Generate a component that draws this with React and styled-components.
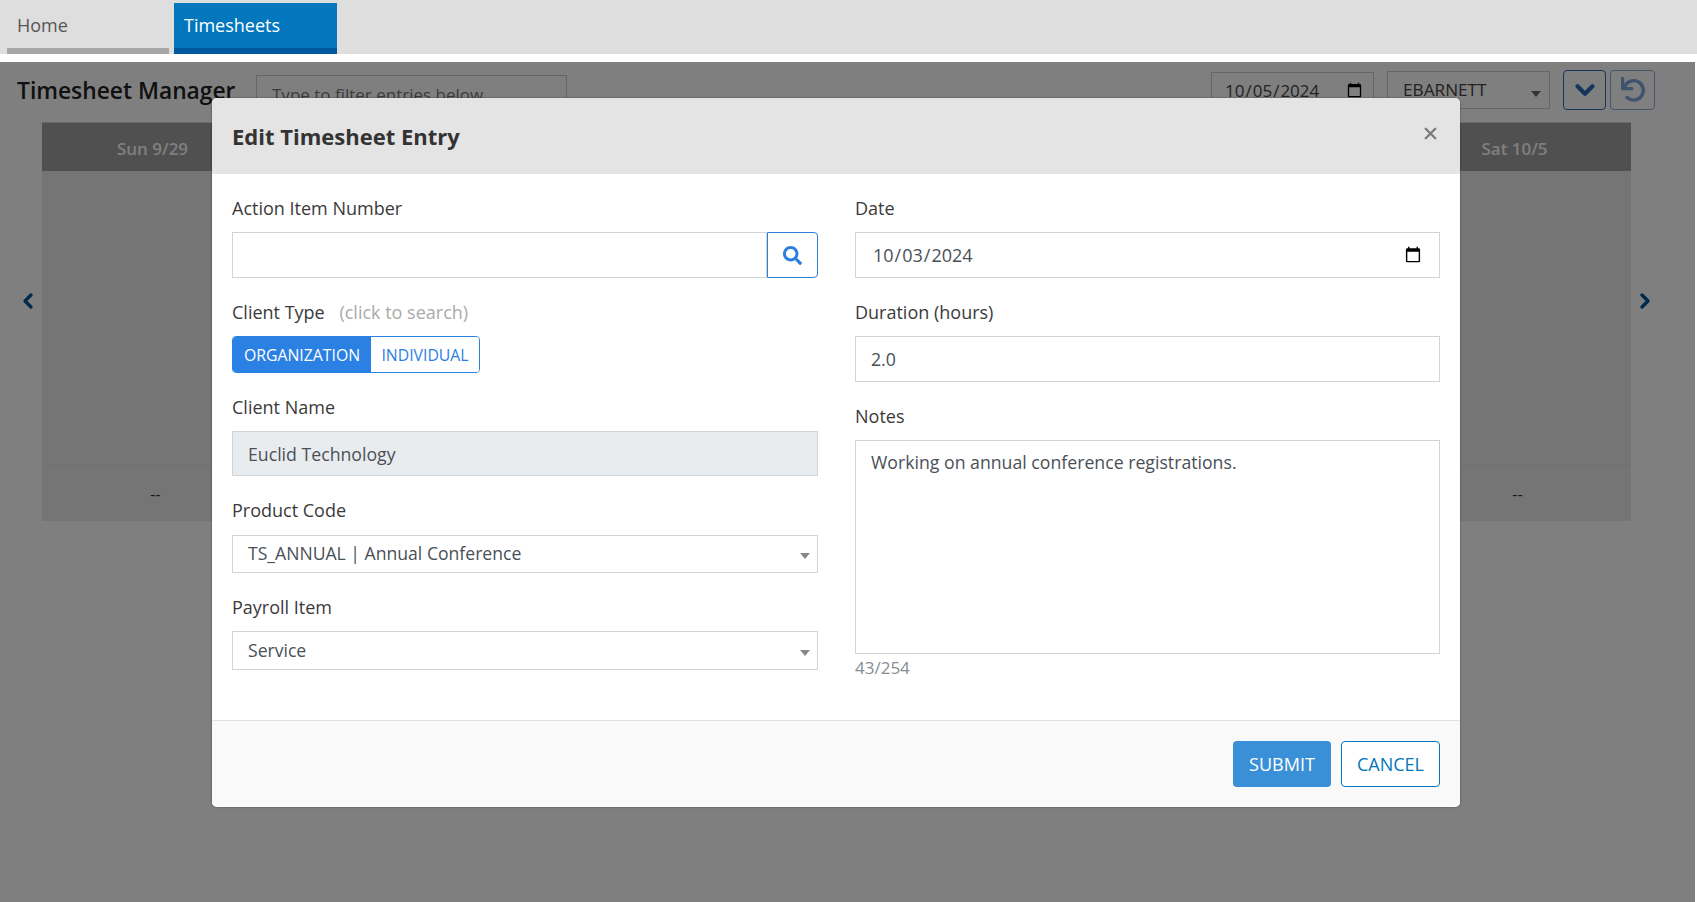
import React from "react";
import styled, { createGlobalStyle } from "styled-components";
import { ChevronDown, ChevronLeft, ChevronRight, X } from "lucide-react";
import { FaSearch } from "react-icons/fa";

const GlobalStyle = createGlobalStyle`
  html, body {
    margin: 0;
    padding: 0;
    background: #fff;
    height: 100%;
  }
  body {
    font-family: "Open Sans", "Liberation Sans", sans-serif;
    color: #333;
    overflow: hidden;
  }
  * {
    box-sizing: border-box;
  }
`;

const days = ["Sun 9/29", "Mon 9/30", "Tue 10/1", "Wed 10/2", "Thu 10/3", "Fri 10/4", "Sat 10/5"];

function Select({ value, height }) {
  return (
    <SelectWrap $height={height}>
      <SelectBox defaultValue={value}>
        <option>{value}</option>
      </SelectBox>
    </SelectWrap>
  );
}

function UndoIcon() {
  return (
    <svg width="24" height="26" viewBox="0 0 24 26" fill="none" stroke="currentColor" strokeWidth="3.4">
      <path d="M1.5 1.5V11.6H10.8" strokeLinejoin="round" strokeLinecap="round" />
      <path d="M3.5 10A9.7 9.7 0 1 1 6 20.5" strokeLinecap="round" />
    </svg>
  );
}

export default function App() {
  return (
    <Page>
      <GlobalStyle />
      <TopBar>
        <Tab>Home</Tab>
        <Tab $active>Timesheets</Tab>
      </TopBar>

      <Toolbar>
        <Title>Timesheet Manager</Title>
        <FilterInput placeholder="Type to filter entries below" />
        <ToolbarRight>
          <ToolbarDate type="date" defaultValue="2024-10-05" />
          <ToolbarSelect>
            EBARNETT
            <SmallCaret />
          </ToolbarSelect>
          <IconButton $width={43}>
            <ChevronDown size={30} strokeWidth={3.4} />
          </IconButton>
          <IconButton $width={45} $muted>
            <UndoIcon />
          </IconButton>
        </ToolbarRight>
      </Toolbar>

      <CalendarRow>
        <Gutter $width={42} $left={16}>
          <ChevronLeft size={24} strokeWidth={3.4} />
        </Gutter>
        <Calendar>
          {days.map((day) => (
            <DayColumn key={day}>
              <DayHeader>{day}</DayHeader>
              <DayBody />
              <DayTotal>--</DayTotal>
            </DayColumn>
          ))}
        </Calendar>
        <Gutter $width={66} $left={2}>
          <ChevronRight size={24} strokeWidth={3.4} />
        </Gutter>
      </CalendarRow>

      <Overlay>
        <Modal>
          <ModalHeader>
            <ModalTitle>Edit Timesheet Entry</ModalTitle>
            <CloseButton>
              <X size={19} strokeWidth={3} />
            </CloseButton>
          </ModalHeader>

          <ModalBody>
            <Column>
              <Field>
                <Label>Action Item Number</Label>
                <InputGroup>
                  <TextInput $height={46} />
                  <SearchButton>
                    <FaSearch size={19} />
                  </SearchButton>
                </InputGroup>
              </Field>
              <Field>
                <Label>
                  Client Type <Hint>(click to search)</Hint>
                </Label>
                <Toggle>
                  <ToggleOption $active $width={138}>ORGANIZATION</ToggleOption>
                  <ToggleOption $width={108}>INDIVIDUAL</ToggleOption>
                </Toggle>
              </Field>
              <Field>
                <Label>Client Name</Label>
                <TextInput $height={45} $disabled readOnly defaultValue="Euclid Technology" />
              </Field>
              <Field>
                <Label $gap={13}>Product Code</Label>
                <Select value="TS_ANNUAL | Annual Conference" height={38} />
              </Field>
              <Field>
                <Label>Payroll Item</Label>
                <Select value="Service" height={39} />
              </Field>
            </Column>

            <Column>
              <Field>
                <Label>Date</Label>
                <DateInput type="date" defaultValue="2024-10-03" />
              </Field>
              <Field>
                <Label>Duration (hours)</Label>
                <TextInput $height={46} defaultValue="2.0" />
              </Field>
              <Field>
                <Label>Notes</Label>
                <Notes defaultValue="Working on annual conference registrations." />
                <Counter>43/254</Counter>
              </Field>
            </Column>
          </ModalBody>

          <ModalFooter>
            <SubmitButton>SUBMIT</SubmitButton>
            <CancelButton>CANCEL</CancelButton>
          </ModalFooter>
        </Modal>
      </Overlay>
    </Page>
  );
}

const Page = styled.div`
  position: relative;
  width: 1697px;
  height: 902px;
  overflow: hidden;
  background: #fff;
`;

const TopBar = styled.div`
  display: flex;
  align-items: flex-end;
  gap: 5px;
  height: 54px;
  padding-left: 7px;
  background: #dedede;
`;

const Tab = styled.div`
  width: ${(p) => (p.$active ? "163px" : "162px")};
  height: ${(p) => (p.$active ? "51px" : "54px")};
  padding: ${(p) => (p.$active ? "7px 0 0 10px" : "10px 0 0 10px")};
  font-size: 18px;
  line-height: 30px;
  color: ${(p) => (p.$active ? "#fff" : "#555")};
  background: ${(p) => (p.$active ? "#0277bd" : "transparent")};
  border-bottom: 6px solid ${(p) => (p.$active ? "#01579b" : "#a6a6a6")};
`;

const Toolbar = styled.div`
  display: flex;
  align-items: flex-start;
  height: 60px;
  margin-top: 8px;
  padding-left: 17px;
`;

const Title = styled.h1`
  margin: 10px 0 0;
  width: 239px;
  font-size: 22.8px;
  line-height: 38px;
  font-weight: 600;
  color: #222;
  white-space: nowrap;
`;

const FilterInput = styled.input`
  width: 311px;
  height: 38px;
  margin-top: 13px;
  padding: 0 15px;
  font: 17px "Open Sans", sans-serif;
  border: 1px solid #ccc;
  background: #fff;
  &::placeholder {
    color: #777;
  }
`;

const ToolbarRight = styled.div`
  display: flex;
  align-items: flex-start;
  gap: 4px;
  margin-left: auto;
  margin-right: 42px;
`;

const ToolbarDate = styled.input`
  width: 163px;
  height: 37px;
  margin: 10px 9px 0 0;
  padding: 0 8px 0 12px;
  font: 17px "Open Sans", sans-serif;
  color: #444;
  background: #fff;
  border: 1px solid #ccc;
`;

const ToolbarSelect = styled.div`
  position: relative;
  width: 163px;
  height: 38px;
  margin: 9px 9px 0 0;
  padding-left: 15px;
  font-size: 17.2px;
  line-height: 36px;
  color: #444;
  border: 1px solid #ccc;
`;

const SmallCaret = styled.span`
  position: absolute;
  right: 8px;
  top: 19px;
  border-left: 5px solid transparent;
  border-right: 5px solid transparent;
  border-top: 6px solid #666;
`;

const IconButton = styled.button`
  display: flex;
  align-items: center;
  justify-content: center;
  width: ${(p) => p.$width}px;
  height: 40px;
  margin-top: 8px;
  padding: 0;
  color: ${(p) => (p.$muted ? "#7aa6dc" : "#2a6cb5")};
  background: #fff;
  border: 1px solid ${(p) => (p.$muted ? "#8aaad2" : "#2a6cb5")};
  border-radius: 4px;
`;

const CalendarRow = styled.div`
  display: flex;
  align-items: flex-start;
`;

const Gutter = styled.div`
  flex: 0 0 auto;
  width: ${(p) => p.$width}px;
  margin-top: 167px;
  padding-left: ${(p) => p.$left}px;
  color: #01579b;
`;

const Calendar = styled.div`
  display: grid;
  grid-template-columns: repeat(7, 1fr);
  flex: 1;
  height: 399px;
  background: #eaeaea;
`;

const DayColumn = styled.div`
  display: flex;
  flex-direction: column;
`;

const DayHeader = styled.div`
  height: 49px;
  padding-right: 6px;
  font-size: 17px;
  font-weight: 600;
  line-height: 52px;
  text-align: center;
  color: #fff;
  background: #a0a0a0;
  border-top: 1px solid #d2d2d2;
`;

const DayBody = styled.div`
  flex: 1;
`;

const DayTotal = styled.div`
  height: 56px;
  font-size: 16px;
  line-height: 56px;
  text-align: center;
  color: #333;
  border-top: 1px solid #e0e0e0;
`;

const Overlay = styled.div`
  position: absolute;
  top: 62px;
  left: 0;
  right: 2px;
  bottom: 0;
  padding: 36px 0 0 212px;
  background: rgba(0, 0, 0, 0.5);
`;

const Modal = styled.div`
  display: flex;
  flex-direction: column;
  width: 1248px;
  height: 709px;
  overflow: hidden;
  background: #fff;
  border-radius: 5px;
  box-shadow: 0 0 2px rgba(0, 0, 0, 0.5);
`;

const ModalHeader = styled.div`
  display: flex;
  align-items: center;
  justify-content: space-between;
  height: 76px;
  padding: 0 20px 0 20px;
  background: #e4e4e4;
`;

const ModalTitle = styled.h2`
  margin: 0;
  font-size: 22px;
  font-weight: 700;
  color: #333;
`;

const CloseButton = styled.span`
  display: flex;
  margin-top: -5px;
  color: #7a7a7a;
`;

const ModalBody = styled.div`
  display: grid;
  grid-template-columns: 586px 585px;
  column-gap: 37px;
  flex: 1;
  padding: 22px 20px 0;
`;

const Column = styled.div`
  display: flex;
  flex-direction: column;
  gap: 22px;
`;

const Field = styled.div`
  display: flex;
  flex-direction: column;
`;

const Label = styled.label`
  margin-bottom: ${(p) => p.$gap || 12}px;
  font-size: 18px;
  line-height: 24px;
  color: #3a3a3a;
`;

const Hint = styled.span`
  margin-left: 10px;
  color: #aaa;
`;

const InputGroup = styled.div`
  display: flex;
`;

const TextInput = styled.input`
  display: block;
  width: 100%;
  min-width: 0;
  height: ${(p) => p.$height}px;
  flex: none;
  padding: 0 15px;
  font: 17.7px "Open Sans", sans-serif;
  color: #495057;
  background: ${(p) => (p.$disabled ? "#e9ecef" : "#fff")};
  border: 1px solid #ced4da;
  outline: none;
  ${InputGroup} & {
    flex: 1;
  }
`;

const SearchButton = styled.button`
  display: flex;
  align-items: center;
  justify-content: center;
  flex: 0 0 51px;
  height: 46px;
  padding: 0;
  color: #2b7fe0;
  background: #fff;
  border: 1px solid #2f7fd9;
  border-radius: 0 4px 4px 0;
`;

const DateInput = styled.input`
  height: 46px;
  padding: 0 15px 0 16px;
  font: 18px "Open Sans", sans-serif;
  color: #495057;
  background: #fff;
  border: 1px solid #ced4da;
  outline: none;
`;

const Toggle = styled.div`
  display: flex;
  align-self: flex-start;
  height: 37px;
  overflow: hidden;
  border: 1px solid #2b80e4;
  border-radius: 4px;
`;

const ToggleOption = styled.div`
  width: ${(p) => p.$width}px;
  font-size: 15.8px;
  line-height: 36px;
  text-align: center;
  color: ${(p) => (p.$active ? "#fff" : "#2b80e4")};
  background: ${(p) => (p.$active ? "#2b80e4" : "#fff")};
`;

const SelectWrap = styled.div`
  position: relative;
  height: ${(p) => p.$height}px;
  &::after {
    content: "";
    position: absolute;
    right: 8px;
    top: 50%;
    margin-top: -1px;
    border-left: 5px solid transparent;
    border-right: 5px solid transparent;
    border-top: 6px solid #888;
    pointer-events: none;
  }
`;

const SelectBox = styled.select`
  appearance: none;
  width: 100%;
  height: 100%;
  padding: 0 15px 2px;
  font: 17.6px "Open Sans", sans-serif;
  color: #495057;
  background: #fff;
  border: 1px solid #ced4da;
  border-radius: 0;
  outline: none;
`;

const Notes = styled.textarea`
  height: 214px;
  padding: 9px 15px;
  font: 17.7px/24px "Open Sans", sans-serif;
  color: #495057;
  border: 1px solid #ced4da;
  outline: none;
  resize: none;
`;

const Counter = styled.div`
  margin-top: 2px;
  font-size: 17px;
  line-height: 24px;
  color: #868e96;
`;

const ModalFooter = styled.div`
  display: flex;
  align-items: center;
  justify-content: flex-end;
  gap: 10px;
  height: 87px;
  padding-right: 20px;
  background: #f9f9f9;
  border-top: 1px solid #dee2e6;
`;

const SubmitButton = styled.button`
  width: 98px;
  height: 46px;
  font: 18px "Open Sans", sans-serif;
  color: #fff;
  background: #3a90d6;
  border: none;
  border-radius: 4px;
`;

const CancelButton = styled.button`
  width: 99px;
  height: 46px;
  font: 18px "Open Sans", sans-serif;
  color: #0277bd;
  background: #fff;
  border: 1px solid #0277bd;
  border-radius: 4px;
`;
